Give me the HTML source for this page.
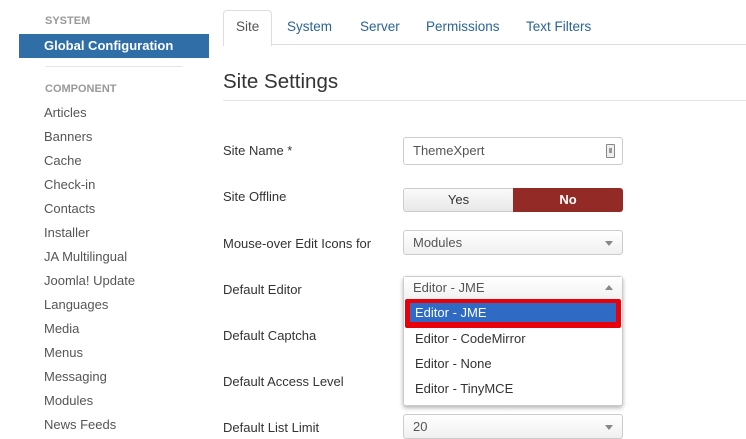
<!DOCTYPE html>
<html><head><meta charset="utf-8"><style>
*{margin:0;padding:0;box-sizing:border-box}
body{width:746px;height:439px;overflow:hidden;background:#fff;font-family:"Liberation Sans",Arial,sans-serif;font-size:13px;color:#333;position:relative}
.a{position:absolute;white-space:nowrap}
.side{left:44px;color:#555;font-size:13px}
.hd{left:45px;color:#999;font-size:11px;font-weight:bold}
.tab{top:19px;color:#2a6496;font-size:13.5px}
.lbl{left:223px;font-size:13px;color:#333}
.box{position:absolute;left:403px;width:220px;border:1px solid #ccc;border-radius:3px;background:linear-gradient(#fff,#f0f0f0);font-size:13px;color:#555;padding-left:9px}
.arr{position:absolute;right:9px;top:50%;margin-top:-2px;width:0;height:0;border-left:4px solid transparent;border-right:4px solid transparent;border-top:5px solid #888}
</style></head><body>
<div class="a hd" style="top:15px">SYSTEM</div>
<div class="a" style="left:19px;top:34px;width:190px;height:24px;background:#2f6ea6"></div>
<div class="a" style="left:44px;top:38px;color:#fff;font-size:13px;font-weight:bold">Global Configuration</div>
<div class="a" style="left:45px;top:66px;width:137px;height:1px;background:#e5e5e5"></div>
<div class="a hd" style="top:83px">COMPONENT</div>
<div class="a side" style="top:105px">Articles</div>
<div class="a side" style="top:129px">Banners</div>
<div class="a side" style="top:153px">Cache</div>
<div class="a side" style="top:177px">Check-in</div>
<div class="a side" style="top:201px">Contacts</div>
<div class="a side" style="top:225px">Installer</div>
<div class="a side" style="top:249px">JA Multilingual</div>
<div class="a side" style="top:273px">Joomla! Update</div>
<div class="a side" style="top:297px">Languages</div>
<div class="a side" style="top:321px">Media</div>
<div class="a side" style="top:345px">Menus</div>
<div class="a side" style="top:369px">Messaging</div>
<div class="a side" style="top:393px">Modules</div>
<div class="a side" style="top:417px">News Feeds</div>

<div class="a" style="left:223px;top:44px;width:523px;height:1px;background:#ddd"></div>
<div class="a" style="left:223px;top:10px;width:49px;height:36px;border:1px solid #ddd;border-bottom:none;border-radius:4px 4px 0 0;background:#fff"></div>
<div class="a tab" style="left:236px;color:#555">Site</div>
<div class="a tab" style="left:287px">System</div>
<div class="a tab" style="left:360px">Server</div>
<div class="a tab" style="left:426px">Permissions</div>
<div class="a tab" style="left:526px">Text Filters</div>
<div class="a" style="left:223px;top:70px;font-size:20.5px;color:#333">Site Settings</div>
<div class="a" style="left:223px;top:100px;width:523px;height:1px;background:#e5e5e5"></div>

<div class="a lbl" style="top:143px">Site Name *</div>
<div class="a lbl" style="top:189px">Site Offline</div>
<div class="a lbl" style="top:236px">Mouse-over Edit Icons for</div>
<div class="a lbl" style="top:282px">Default Editor</div>
<div class="a lbl" style="top:328px">Default Captcha</div>
<div class="a lbl" style="top:374px">Default Access Level</div>
<div class="a lbl" style="top:420px">Default List Limit</div>

<div class="box" style="top:137px;height:28px;background:#fff;line-height:26px">ThemeXpert
<div style="position:absolute;right:7px;top:6px;width:9px;height:14px;border:1px solid #888;border-radius:1px;background:#eee"><div style="margin:3px 2px;height:5px;background:#999"></div></div></div>

<div class="a" style="left:403px;top:188px;width:111px;height:24px;border:1px solid #ccc;border-radius:3px 0 0 3px;background:linear-gradient(#fafafa,#e8e8e8);text-align:center;line-height:22px;color:#333">Yes</div>
<div class="a" style="left:513px;top:188px;width:110px;height:24px;border-radius:0 3px 3px 0;background:#942a25;text-align:center;line-height:24px;color:#fff;font-weight:bold">No</div>

<div class="box" style="top:230px;height:25px;line-height:23px">Modules<div class="arr"></div></div>

<div class="box" style="top:276px;height:130px;background:#fff;box-shadow:0 2px 4px rgba(0,0,0,.3);padding:0">
<div style="height:22px;line-height:22px;padding-left:9px;background:linear-gradient(#fff,#f2f2f2)">Editor - JME<div style="position:absolute;right:9px;top:8px;width:0;height:0;border-left:4px solid transparent;border-right:4px solid transparent;border-bottom:5px solid #888"></div></div>
<div style="position:absolute;left:1px;top:22px;width:216px;height:29px;background:#e8000b;border-radius:2px"></div>
<div style="position:absolute;left:6px;top:26px;width:206px;height:19px;background:#2f6bc4;color:#fff;line-height:19px;padding-left:5px">Editor - JME</div>
<div style="position:absolute;left:11px;top:54px;color:#333">Editor - CodeMirror</div>
<div style="position:absolute;left:11px;top:79px;color:#333">Editor - None</div>
<div style="position:absolute;left:11px;top:104px;color:#333">Editor - TinyMCE</div>
</div>

<div class="box" style="top:414px;height:25px;line-height:23px">20<div class="arr"></div></div>
</body></html>
